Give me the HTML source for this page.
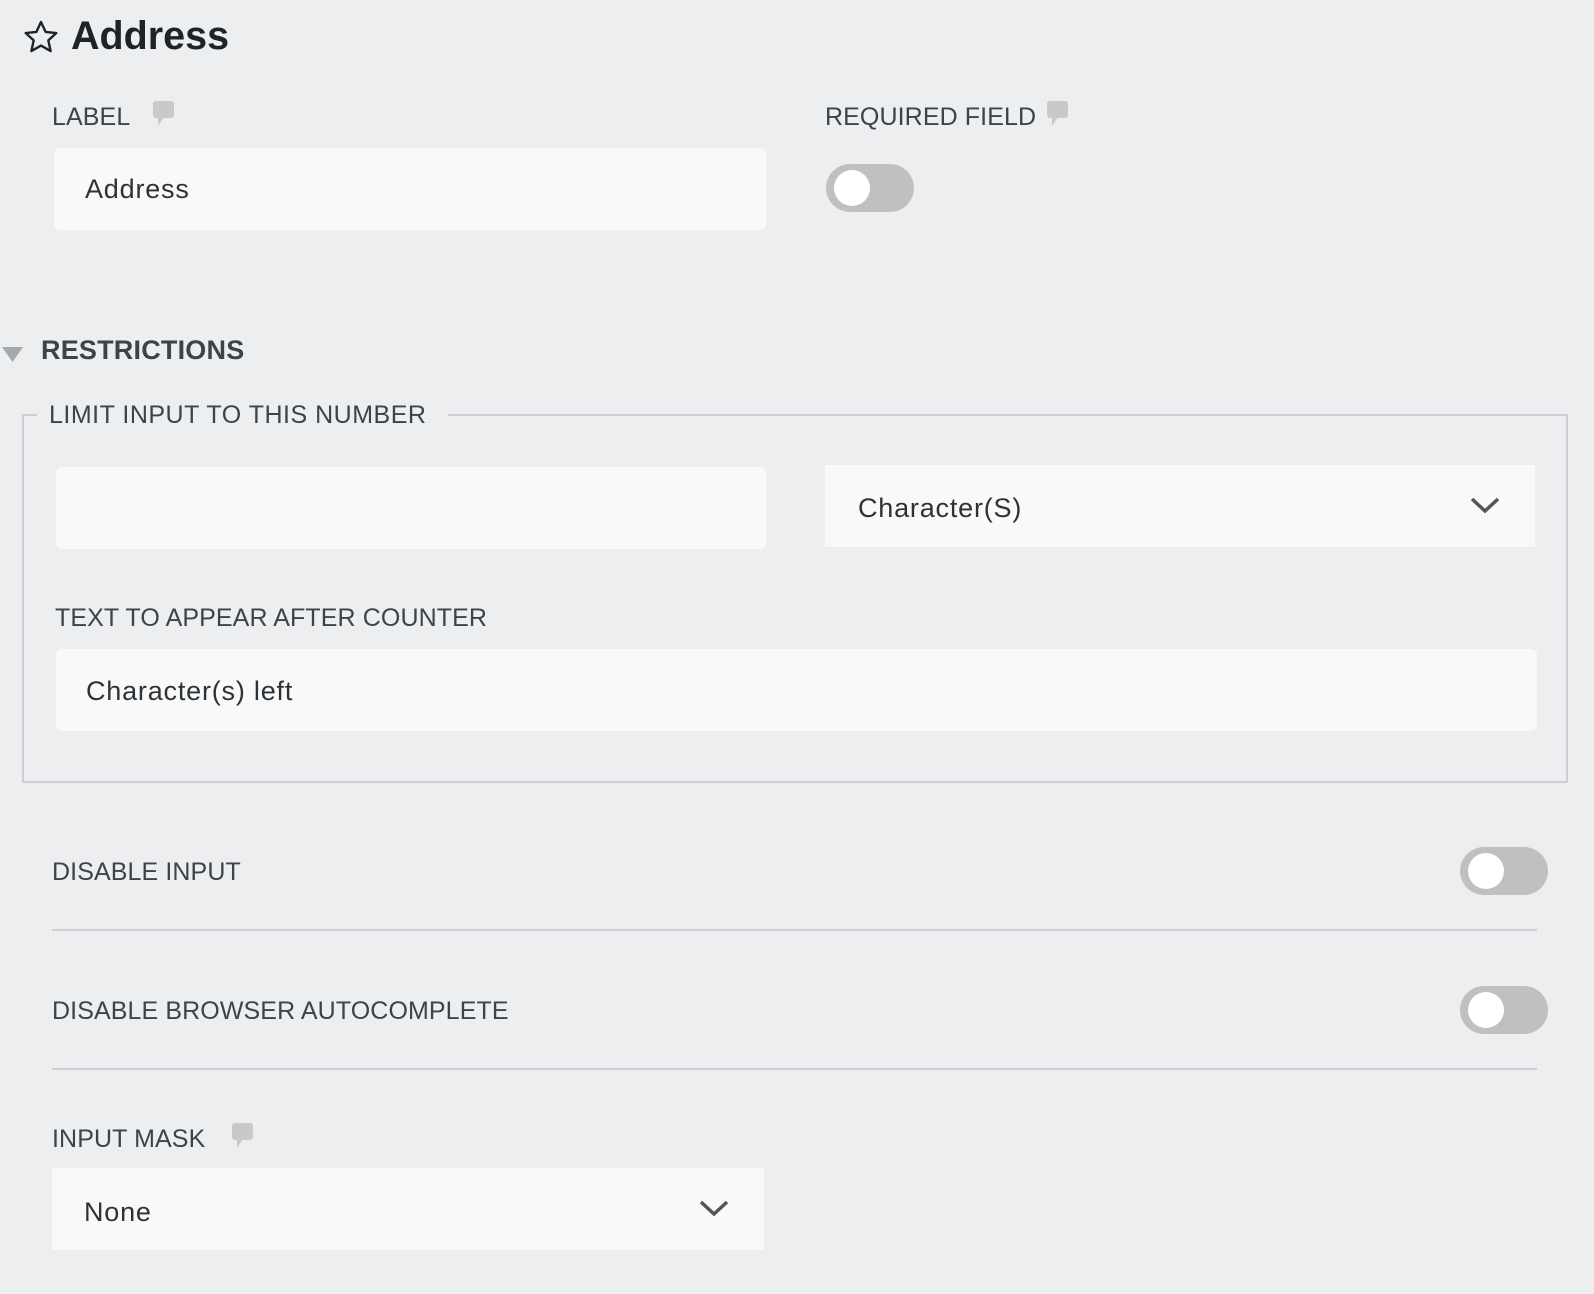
<!DOCTYPE html>
<html><head><meta charset="utf-8"><style>
*{box-sizing:border-box;margin:0;padding:0}
body{width:1594px;height:1294px;background:#edeef0;font-family:"Liberation Sans",sans-serif;color:#3c434a;position:relative;overflow:hidden}
.a{position:absolute;white-space:nowrap}
.lbl{font-size:25px;line-height:28px;letter-spacing:0.1px}
.box{position:absolute;background:#f9f9f9}
.txt{font-size:27px;color:#2c3338;letter-spacing:0.8px}
.tog{position:absolute;width:88px;height:48px;border-radius:24px;background:#bfc0c2}
.tog::after{content:"";position:absolute;left:8px;top:6px;width:36px;height:36px;border-radius:50%;background:#fff}
.line{position:absolute;height:2px;background:#cdcfd2}
</style></head><body>
<svg class="a" style="left:22px;top:18px" width="38" height="38" viewBox="0 0 24 24"><path d="M12 2.5l2.9 6.3 6.8.7-5.1 4.6 1.5 6.8L12 17.4l-6.1 3.5 1.5-6.8-5.1-4.6 6.8-.7z" fill="none" stroke="#1d2327" stroke-width="1.5" stroke-linejoin="round"/></svg>
<div class="a" style="left:71px;top:10px;font-size:39.5px;font-weight:bold;color:#1d2327;line-height:52px">Address</div>

<div class="a lbl" style="left:52px;top:103px">LABEL</div>
<svg class="a" style="left:153px;top:101px" width="22" height="26" viewBox="0 0 22 26"><rect x="0" y="0" width="21" height="17" rx="3" fill="#c8c9cb"/><path d="M5 16h6l-6 9z" fill="#c8c9cb"/></svg>
<div class="box" style="left:54px;top:148px;width:712px;height:82px;border-radius:6px"></div>
<div class="a txt" style="left:85px;top:174px;line-height:30px">Address</div>

<div class="a lbl" style="left:825px;top:103px">REQUIRED FIELD</div>
<svg class="a" style="left:1047px;top:101px" width="22" height="26" viewBox="0 0 22 26"><rect x="0" y="0" width="21" height="17" rx="3" fill="#c8c9cb"/><path d="M5 16h6l-6 9z" fill="#c8c9cb"/></svg>
<div class="tog" style="left:826px;top:164px"></div>

<svg class="a" style="left:2px;top:347px" width="22" height="16" viewBox="0 0 22 16"><path d="M0 0h21L10.5 15z" fill="#a7aaad"/></svg>
<div class="a" style="left:41px;top:335px;font-size:27px;font-weight:bold;line-height:30px;color:#3c434a;letter-spacing:0.2px">RESTRICTIONS</div>

<div class="a" style="left:22px;top:414px;width:1546px;height:369px;border:2px solid #cdcfd2"></div>
<div class="a lbl" style="left:37px;top:401px;background:#edeef0;padding:0 12px;width:411px;letter-spacing:0.5px">LIMIT INPUT TO THIS NUMBER</div>

<div class="box" style="left:56px;top:467px;width:710px;height:82px;border-radius:6px"></div>
<div class="box" style="left:825px;top:465px;width:710px;height:82px"></div>
<div class="a txt" style="left:858px;top:493px;line-height:30px">Character(S)</div>
<svg class="a" style="left:1470px;top:496px" width="30" height="18" viewBox="0 0 30 18"><path d="M2 3l13 12L28 3" fill="none" stroke="#555" stroke-width="3.5"/></svg>

<div class="a lbl" style="left:55px;top:604px">TEXT TO APPEAR AFTER COUNTER</div>
<div class="box" style="left:56px;top:649px;width:1481px;height:82px;border-radius:6px"></div>
<div class="a txt" style="left:86px;top:676px;line-height:30px">Character(s) left</div>

<div class="a lbl" style="left:52px;top:858px">DISABLE INPUT</div>
<div class="tog" style="left:1460px;top:847px"></div>
<div class="line" style="left:52px;top:929px;width:1485px"></div>

<div class="a lbl" style="left:52px;top:997px">DISABLE BROWSER AUTOCOMPLETE</div>
<div class="tog" style="left:1460px;top:986px"></div>
<div class="line" style="left:52px;top:1068px;width:1485px"></div>

<div class="a lbl" style="left:52px;top:1125px">INPUT MASK</div>
<svg class="a" style="left:232px;top:1123px" width="22" height="26" viewBox="0 0 22 26"><rect x="0" y="0" width="21" height="17" rx="3" fill="#c8c9cb"/><path d="M5 16h6l-6 9z" fill="#c8c9cb"/></svg>
<div class="box" style="left:52px;top:1168px;width:712px;height:82px"></div>
<div class="a txt" style="left:84px;top:1197px;line-height:30px">None</div>
<svg class="a" style="left:699px;top:1199px" width="30" height="18" viewBox="0 0 30 18"><path d="M2 3l13 12L28 3" fill="none" stroke="#555" stroke-width="3.5"/></svg>
</body></html>
